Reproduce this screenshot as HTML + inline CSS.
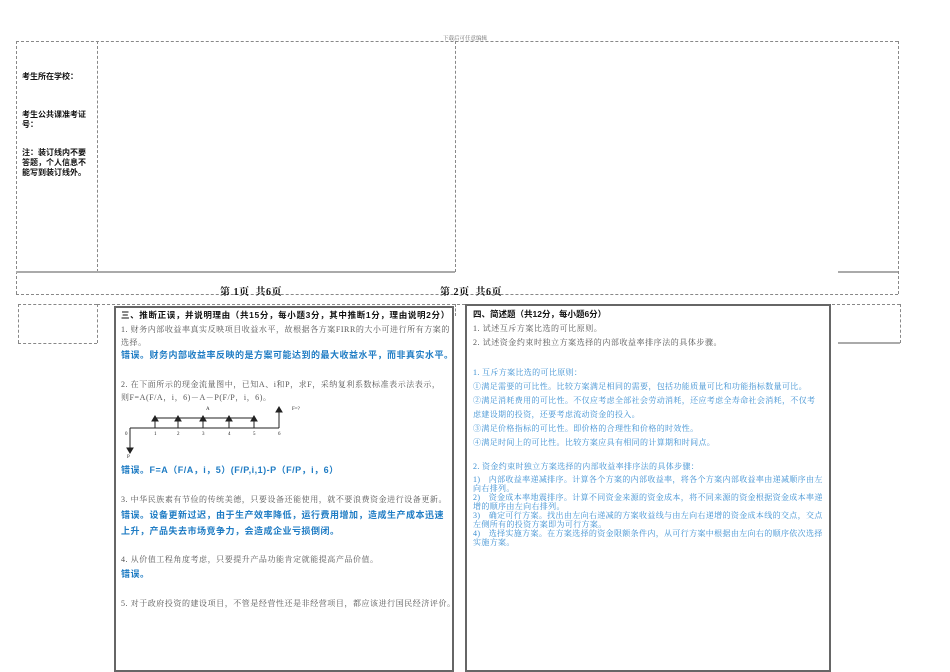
<!DOCTYPE html>
<html><head><meta charset="utf-8"><style>
body{margin:0;width:950px;height:672px;background:#fff;position:relative;overflow:hidden;font-family:"Liberation Serif","Noto Serif CJK SC",serif;}
.a{position:absolute;white-space:nowrap;}
.g{color:#555;font-size:8px;letter-spacing:0.55px;}
.h{color:#111;font-size:8.5px;font-weight:bold;font-family:"Liberation Sans","Noto Sans CJK SC",sans-serif;}
.b{color:#1f7cc4;font-size:9px;font-weight:bold;font-family:"Liberation Sans","Noto Sans CJK SC",sans-serif;letter-spacing:0.5px;}
.lb{color:#3b8fd2;font-size:8px;letter-spacing:0.35px;}
.k{color:#111;font-size:8px;font-weight:bold;font-family:"Liberation Sans","Noto Sans CJK SC",sans-serif;line-height:10px;}
.dh{position:absolute;border-top:1px dashed #888;height:0;}
.dv{position:absolute;border-left:1px dashed #888;width:0;}
.sh{position:absolute;border-top:2px solid #aaa;height:0;}
.box{position:absolute;border:2px solid #666;box-sizing:border-box;}
.pf{position:absolute;white-space:nowrap;font-size:10px;font-weight:bold;color:#111;letter-spacing:0.5px;}
</style></head><body>
<div class="a" style="left:443px;top:34px;font-size:5.5px;color:#666;">下载后可任意编辑</div>
<div class="dh" style="left:16px;top:41px;width:882px;"></div>
<div class="dv" style="left:16px;top:41px;height:253px;"></div>
<div class="dv" style="left:97px;top:41px;height:231px;"></div>
<div class="dv" style="left:455px;top:41px;height:231px;"></div>
<div class="dv" style="left:898px;top:41px;height:253px;"></div>
<div class="dh" style="left:16px;top:294px;width:882px;"></div>
<div class="sh" style="left:16px;top:271px;width:439px;"></div>
<div class="sh" style="left:838px;top:271px;width:60px;"></div>
<div class="a k" style="left:22px;top:72px;">考生所在学校：</div>
<div class="a k" style="left:22px;top:110px;">考生公共课准考证<br>号：</div>
<div class="a k" style="left:22px;top:148px;">注：装订线内不要<br>答题，个人信息不<br>能写到装订线外。</div>
<div class="pf" style="left:220px;top:283px;">第 1页&nbsp;&nbsp;共6页</div>
<div class="pf" style="left:440px;top:283px;">第 2页&nbsp;&nbsp;共6页</div>
<div class="dh" style="left:97px;top:304px;width:803px;"></div>
<div class="dh" style="left:18px;top:304px;width:79px;"></div>
<div class="dv" style="left:18px;top:304px;height:39px;"></div>
<div class="dv" style="left:97px;top:304px;height:39px;"></div>
<div class="dh" style="left:18px;top:343px;width:79px;"></div>
<div class="dv" style="left:455px;top:304px;height:12px;"></div>
<div class="dv" style="left:900px;top:304px;height:39px;"></div>
<div class="sh" style="left:838px;top:342px;width:62px;"></div>
<div class="box" style="left:114px;top:306px;width:340px;height:366px;"></div>
<div class="box" style="left:465px;top:304px;width:366px;height:368px;"></div>
<div class="a h" style="left:121px;top:309px;letter-spacing:0.65px;">三、推断正误，并说明理由（共15分，每小题3分，其中推断1分，理由说明2分）</div>
<div class="a g" style="left:121px;top:324px;">1. 财务内部收益率真实反映项目收益水平，故根据各方案FIRR的大小可进行所有方案的</div>
<div class="a g" style="left:121px;top:337px;">选择。</div>
<div class="a b" style="left:121px;top:348px;">错误。财务内部收益率反映的是方案可能达到的最大收益水平，而非真实水平。</div>
<div class="a g" style="left:121px;top:379px;">2. 在下面所示的现金流量图中，已知A、i和P，求F，采纳复利系数标准表示法表示，</div>
<div class="a g" style="left:121px;top:392px;">则F=A(F/A，i，6)－A－P(F/P，i，6)。</div>
<svg class="a" style="left:115px;top:400px;" width="200" height="62" viewBox="115 400 200 62">
<g stroke="#222" stroke-width="1" fill="#222">
<line x1="130" y1="428" x2="279" y2="428"/>
<line x1="155" y1="418" x2="254" y2="418"/>
<line x1="155" y1="428" x2="155" y2="419"/><path d="M152 421 L155 416 L158 421Z"/>
<line x1="178" y1="428" x2="178" y2="419"/><path d="M175 421 L178 416 L181 421Z"/>
<line x1="203" y1="428" x2="203" y2="419"/><path d="M200 421 L203 416 L206 421Z"/>
<line x1="229" y1="428" x2="229" y2="419"/><path d="M226 421 L229 416 L232 421Z"/>
<line x1="254" y1="428" x2="254" y2="419"/><path d="M251 421 L254 416 L257 421Z"/>
<line x1="279" y1="428" x2="279" y2="410"/><path d="M276 412 L279 407 L282 412Z"/>
<line x1="130" y1="428" x2="130" y2="450"/><path d="M127 448 L130 453 L133 448Z"/>
</g>
<g font-size="5px" fill="#222" font-family="Liberation Serif">
<text x="125" y="435">0</text><text x="154" y="435">1</text><text x="177" y="435">2</text><text x="202" y="435">3</text><text x="228" y="435">4</text><text x="253" y="435">5</text><text x="278" y="435">6</text>
<text x="206" y="410">A</text><text x="292" y="410">F=?</text><text x="127" y="458">P</text>
</g></svg>
<div class="a b" style="left:121px;top:463px;">错误。F=A（F/A，i，5）(F/P,i,1)-P（F/P，i，6）</div>
<div class="a g" style="left:121px;top:494px;">3. 中华民族素有节俭的传统美德，只要设备还能使用，就不要浪费资金进行设备更新。</div>
<div class="a b" style="left:121px;top:508px;">错误。设备更新过迟，由于生产效率降低，运行费用增加，造成生产成本迅速</div>
<div class="a b" style="left:121px;top:524px;">上升，产品失去市场竞争力，会造成企业亏损倒闭。</div>
<div class="a g" style="left:121px;top:554px;">4. 从价值工程角度考虑，只要提升产品功能肯定就能提高产品价值。</div>
<div class="a b" style="left:121px;top:567px;">错误。</div>
<div class="a g" style="left:121px;top:598px;">5. 对于政府投资的建设项目，不管是经营性还是非经营项目，都应该进行国民经济评价。</div>
<div class="a h" style="left:473px;top:308px;">四、简述题（共12分，每小题6分）</div>
<div class="a g" style="left:473px;top:323px;">1.  试述互斥方案比选的可比原则。</div>
<div class="a g" style="left:473px;top:337px;">2.  试述资金约束时独立方案选择的内部收益率排序法的具体步骤。</div>
<div class="a lb" style="left:473px;top:367px;">1. 互斥方案比选的可比原则：</div>
<div class="a lb" style="left:473px;top:381px;">①满足需要的可比性。比较方案满足相同的需要，包括功能质量可比和功能指标数量可比。</div>
<div class="a lb" style="left:473px;top:395px;">②满足消耗费用的可比性。不仅应考虑全部社会劳动消耗，还应考虑全寿命社会消耗，不仅考</div>
<div class="a lb" style="left:473px;top:409px;">虑建设期的投资，还要考虑流动资金的投入。</div>
<div class="a lb" style="left:473px;top:423px;">③满足价格指标的可比性。即价格的合理性和价格的时效性。</div>
<div class="a lb" style="left:473px;top:437px;">④满足时间上的可比性。比较方案应具有相同的计算期和时间点。</div>
<div class="a lb" style="left:473px;top:461px;">2. 资金约束时独立方案选择的内部收益率排序法的具体步骤：</div>
<div class="a lb" style="left:473px;top:475px;line-height:9px;">1)　内部收益率递减排序。计算各个方案的内部收益率，将各个方案内部收益率由递减顺序由左<br>向右排列。</div>
<div class="a lb" style="left:473px;top:493px;line-height:9px;">2)　资金成本率地震排序。计算不同资金来源的资金成本，将不同来源的资金根据资金成本率递<br>增的顺序由左向右排列。</div>
<div class="a lb" style="left:473px;top:511px;line-height:9px;">3)　确定可行方案。找出由左向右递减的方案收益线与由左向右递增的资金成本线的交点，交点<br>左侧所有的投资方案即为可行方案。</div>
<div class="a lb" style="left:473px;top:529px;line-height:9px;">4)　选择实施方案。在方案选择的资金限额条件内，从可行方案中根据由左向右的顺序依次选择<br>实施方案。</div>
</body></html>
